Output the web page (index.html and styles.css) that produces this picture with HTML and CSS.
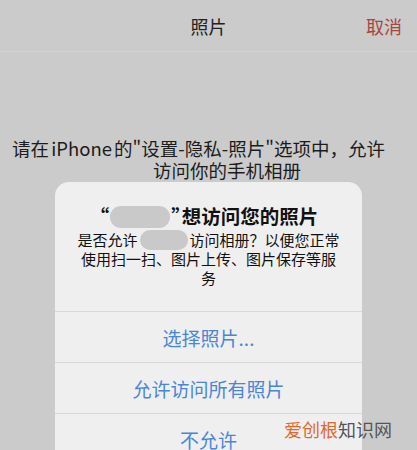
FILE: index.html
```html
<!DOCTYPE html>
<html lang="zh-CN">
<head>
    <meta charset="UTF-8">
    <meta name="viewport" content="width=device-width, initial-scale=1.0">
    <title>照片</title>
    <link rel="stylesheet" href="styles.css">
</head>
<body>
    <div class="screen">
        <header class="nav">
            <span></span>
            <span class="nav-title">照片</span>
            <span class="nav-cancel">取消</span>
        </header>

        <div class="hint">
            <div class="hint-line first">请在 iPhone 的"设置-隐私-照片"选项中，允许</div>
            <div class="hint-line second">访问你的手机相册</div>
        </div>

        <div class="alert">
            <div class="alert-body">
                <div class="alert-title"><span class="quote open">“</span><span class="blur big"></span><span class="quote close">”</span>想访问您的照片</div>
                <div class="alert-text">是否允许<span class="blur small"></span>访问相册？以便您正常使用扫一扫、图片上传、图片保存等服务</div>
            </div>
            <div class="alert-btn">选择照片...</div>
            <div class="alert-btn">允许访问所有照片</div>
            <div class="alert-btn">不允许</div>
        </div>

        <div class="watermark"><span class="wm-orange">爱创根</span>知识网</div>
    </div>
</body>
</html>
```

FILE: styles.css
```css
body {
    margin: 0;
    padding: 0;
    font-family: "Noto Sans CJK SC", "Noto Sans", sans-serif;
    background-color: #cbcbcb;
}

.screen {
    position: relative;
    width: 417px;
    height: 450px;
    overflow: hidden;
    background-color: #cbcbcb;
}

.nav {
    display: grid;
    grid-template-columns: 1fr auto 1fr;
    align-items: center;
    height: 51px;
    padding: 0 15px;
    border-bottom: 1px solid #d3d3d3;
}

.nav-title {
    font-size: 18px;
    color: #222;
}

.nav-cancel {
    justify-self: end;
    font-size: 18px;
    color: #a8453f;
}

.hint {
    margin-top: 85px;
    font-size: 18.5px;
    line-height: 22px;
    color: #1c1c1c;
    white-space: nowrap;
}

.hint-line.first {
    padding-left: 12px;
    word-spacing: -2px;
}

.hint-line.second {
    padding-left: 153px;
}

.alert {
    width: 307px;
    margin: 1px 0 0 55px;
    background-color: #efefef;
    border-radius: 14px 14px 0 0;
}

.alert-body {
    padding: 22px 20px 24px;
    text-align: center;
    color: #111;
}

.alert-title {
    font-size: 19.5px;
    font-weight: 700;
    line-height: 24px;
}

.quote.open {
    margin-left: -9px;
}

.quote.close {
    margin-right: -9px;
}

.alert-text {
    margin-top: 3px;
    font-size: 15px;
    line-height: 18.5px;
}

.blur {
    display: inline-block;
    vertical-align: middle;
    background-color: #c9c9c9;
}

.blur.big {
    width: 60px;
    height: 22px;
    margin: -4px 1px 0;
    border-radius: 11px;
}

.blur.small {
    width: 48px;
    height: 20px;
    margin: -3px 2px 0;
    border-radius: 10px;
}

.alert-btn {
    height: 50px;
    border-top: 1px solid #d8d8d8;
    display: flex;
    align-items: center;
    justify-content: center;
    font-size: 19px;
    color: #4a86d6;
}

.watermark {
    position: absolute;
    right: 25px;
    bottom: 8px;
    font-size: 18px;
    color: #555;
}

.wm-orange {
    color: #e06a2a;
}
```
